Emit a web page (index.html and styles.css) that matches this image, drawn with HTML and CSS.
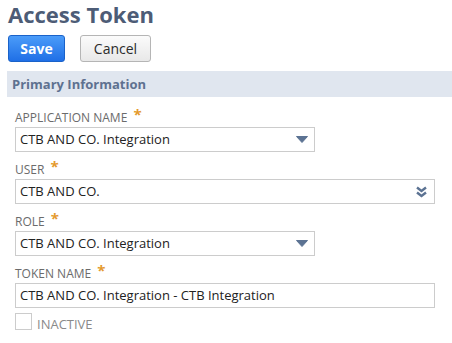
FILE: index.html
```html
<!DOCTYPE html>
<html>
<head>
<meta charset="utf-8">
<link rel="stylesheet" href="styles.css">
</head>
<body>
<div class="page">
  <h1 class="title">Access Token</h1>
  <div class="actions">
    <button class="btn btn-primary">Save</button>
    <button class="btn btn-secondary">Cancel</button>
  </div>
  <div class="section-bar">Primary Information</div>
  <div class="fields">
    <div class="field">
      <div class="label">APPLICATION NAME <span class="req">*</span></div>
      <div class="input select short">
        <span class="value">CTB AND CO. Integration</span>
        <svg class="caret" width="12" height="7" viewBox="0 0 12 7"><path d="M0.5 0.5 H11.5 L6 6.5 Z" fill="#5c7393" stroke="#5c7393" stroke-width="1" stroke-linejoin="round"/></svg>
      </div>
    </div>
    <div class="field">
      <div class="label">USER <span class="req">*</span></div>
      <div class="input select long">
        <span class="value">CTB AND CO.</span>
        <svg class="dbl" width="11" height="12" viewBox="0 0 11 12"><path d="M1 1.5 L5.5 5 L10 1.5 M1 6.5 L5.5 10 L10 6.5" fill="none" stroke="#5c7393" stroke-width="2.4" stroke-linejoin="miter"/></svg>
      </div>
    </div>
    <div class="field">
      <div class="label">ROLE <span class="req">*</span></div>
      <div class="input select short">
        <span class="value">CTB AND CO. Integration</span>
        <svg class="caret" width="12" height="7" viewBox="0 0 12 7"><path d="M0.5 0.5 H11.5 L6 6.5 Z" fill="#5c7393" stroke="#5c7393" stroke-width="1" stroke-linejoin="round"/></svg>
      </div>
    </div>
    <div class="field field-last">
      <div class="label">TOKEN NAME <span class="req">*</span></div>
      <div class="input long">
        <span class="value">CTB AND CO. Integration - CTB Integration</span>
      </div>
    </div>
    <div class="check-row">
      <span class="checkbox"></span>
      <span class="check-label">INACTIVE</span>
    </div>
  </div>
</div>
</body>
</html>
```

FILE: styles.css
```css
html, body {
  margin: 0;
  padding: 0;
  background: #ffffff;
}
body {
  font-family: "Open Sans", "Liberation Sans", sans-serif;
  width: 452px;
  height: 343px;
  overflow: hidden;
}
.page {
  padding-left: 8px;
}
.title {
  margin: 1px 0 0 0;
  font-size: 22px;
  line-height: 26px;
  font-weight: 700;
  color: #4d5c76;
}
.actions {
  display: flex;
  gap: 15px;
  margin-top: 8px;
}
.btn {
  height: 27px;
  box-sizing: border-box;
  font-family: "Open Sans", "Liberation Sans", sans-serif;
  font-size: 14px;
  border-radius: 3px;
  padding: 0;
  cursor: pointer;
}
.btn-primary {
  width: 57px;
  font-weight: 700;
  color: #ffffff;
  border: 1px solid #1a62c9;
  background: linear-gradient(#4b9cf9, #1f6fe6);
}
.btn-secondary {
  width: 71px;
  font-weight: 400;
  color: #2b2b2b;
  border: 1px solid #b5b5b5;
  background: linear-gradient(#fbfbfb, #e8e8e8);
}
.section-bar {
  margin-top: 9px;
  margin-left: -1px;
  height: 26px;
  line-height: 26px;
  padding-left: 5px;
  background: #e0e6ef;
  color: #5e7190;
  font-size: 13px;
  font-weight: 700;
}
.fields {
  padding-left: 7px;
  padding-top: 13px;
}
.field {
  margin-bottom: 10px;
}
.field-last {
  margin-bottom: 5px;
}
.label {
  font-size: 12px;
  height: 16px;
  line-height: 16px;
  color: #6b6b6b;
  margin-bottom: 1px;
  white-space: nowrap;
}
.req {
  color: #e49a2e;
  font-size: 15px;
  line-height: 0;
  font-weight: 700;
  vertical-align: 2px;
  margin-left: 3px;
}
.input {
  box-sizing: border-box;
  height: 25px;
  border: 1px solid #cccccc;
  display: flex;
  align-items: center;
  padding: 0 6px 0 4px;
  font-size: 13px;
  color: #222222;
}
.input.short {
  width: 300px;
}
.input.long {
  width: 420px;
}
.value {
  flex: 1;
  white-space: nowrap;
  line-height: 23px;
}
.caret {
  display: block;
}
.dbl {
  display: block;
  margin-right: 1px;
}
.check-row {
  display: flex;
  align-items: flex-end;
  gap: 5px;
}
.checkbox {
  width: 17px;
  height: 17px;
  box-sizing: border-box;
  border: 1px solid #cccccc;
  background: #ffffff;
}
.check-label {
  font-size: 13px;
  line-height: 13px;
  color: #8a8a8a;
  margin-bottom: -1px;
}
```
